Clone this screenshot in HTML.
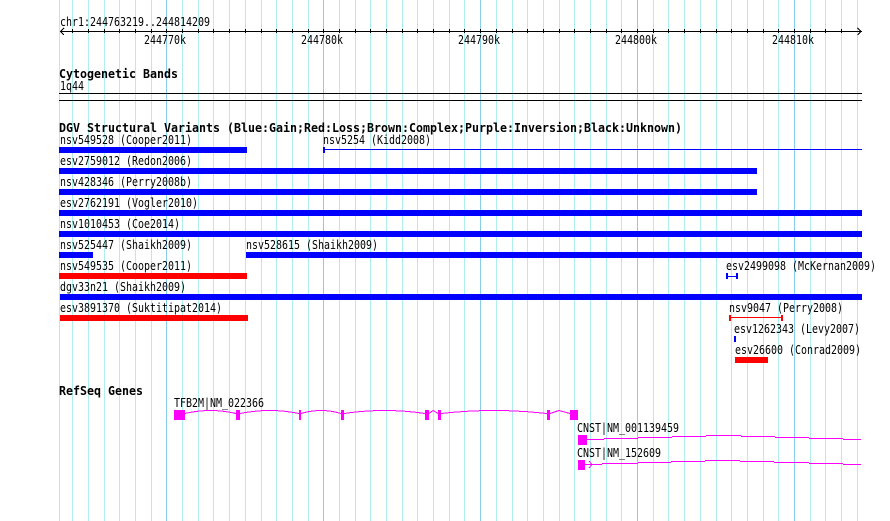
<!DOCTYPE html>
<html><head><meta charset="utf-8"><style>
html,body{margin:0;padding:0;background:#fff;width:890px;height:521px;overflow:hidden}
svg{display:block}
text{font-family:"DejaVu Sans Mono","Liberation Mono",monospace;font-size:12px;fill:#000}
text.b{font-weight:bold;font-size:12.5px}
</style></head><body>
<svg width="890" height="521" viewBox="0 0 890 521" xmlns="http://www.w3.org/2000/svg">
<g shape-rendering="crispEdges">
<path stroke="#aeeeee" stroke-width="1" fill="none" d="M59.5 0V521M72.5 0V521M88.5 0V521M104.5 0V521M119.5 0V521M135.5 0V521M151.5 0V521M182.5 0V521M198.5 0V521M213.5 0V521M229.5 0V521M245.5 0V521M261.5 0V521M276.5 0V521M292.5 0V521M308.5 0V521M339.5 0V521M355.5 0V521M370.5 0V521M386.5 0V521M402.5 0V521M417.5 0V521M433.5 0V521M449.5 0V521M464.5 0V521M496.5 0V521M512.5 0V521M527.5 0V521M543.5 0V521M559.5 0V521M574.5 0V521M590.5 0V521M606.5 0V521M621.5 0V521M653.5 0V521M668.5 0V521M684.5 0V521M700.5 0V521M716.5 0V521M731.5 0V521M747.5 0V521M763.5 0V521M778.5 0V521M810.5 0V521M825.5 0V521M841.5 0V521M857.5 0V521"/>
<path stroke="#87ceeb" stroke-width="1" fill="none" d="M166.5 0V521M323.5 0V521M480.5 0V521M637.5 0V521M794.5 0V521"/>
<path stroke="#000" fill="none" d="M60 31.5H862M59 93.5H862M59 100.5H862"/>
<path stroke="#000" fill="none" d="M72.5 29V33M88.5 29V33M104.5 29V33M119.5 29V33M135.5 29V33M151.5 29V33M166.5 29V33M182.5 29V33M198.5 29V33M213.5 29V33M229.5 29V33M245.5 29V33M261.5 29V33M276.5 29V33M292.5 29V33M308.5 29V33M323.5 29V33M339.5 29V33M355.5 29V33M370.5 29V33M386.5 29V33M402.5 29V33M417.5 29V33M433.5 29V33M449.5 29V33M464.5 29V33M480.5 29V33M496.5 29V33M512.5 29V33M527.5 29V33M543.5 29V33M559.5 29V33M574.5 29V33M590.5 29V33M606.5 29V33M621.5 29V33M637.5 29V33M653.5 29V33M668.5 29V33M684.5 29V33M700.5 29V33M716.5 29V33M731.5 29V33M747.5 29V33M763.5 29V33M778.5 29V33M794.5 29V33M810.5 29V33M825.5 29V33M841.5 29V33"/>
<path stroke="#000" fill="none" d="M64 28L60.5 31.5L64 35M857.5 28L861 31.5L857.5 35"/>
<g fill="#0000ff">
<rect x="59" y="147" width="188" height="6"/>
<rect x="323" y="147" width="2" height="6"/>
<rect x="323" y="149" width="539" height="1"/>
<rect x="59" y="168" width="698" height="6"/>
<rect x="59" y="189" width="698" height="6"/>
<rect x="59" y="210" width="803" height="6"/>
<rect x="59" y="231" width="803" height="6"/>
<rect x="59" y="252" width="34" height="6"/>
<rect x="246" y="252" width="616" height="6"/>
<rect x="60" y="294" width="802" height="6"/>
<rect x="726" y="273" width="2" height="6"/>
<rect x="736" y="273" width="2" height="6"/>
<rect x="726" y="276" width="12" height="1"/>
<rect x="734" y="336" width="2" height="6"/>
</g>
<g fill="#ff0000">
<rect x="59" y="273" width="188" height="6"/>
<rect x="60" y="315" width="188" height="6"/>
<rect x="729" y="315" width="2" height="6"/>
<rect x="781" y="315" width="2" height="6"/>
<rect x="729" y="317" width="54" height="1"/>
<rect x="735" y="357" width="33" height="6"/>
</g>
<g fill="#ff00ff">
<rect x="174" y="410" width="11" height="10"/>
<rect x="236" y="410" width="4" height="10"/>
<rect x="299" y="410" width="2" height="10"/>
<rect x="341" y="410" width="3" height="10"/>
<rect x="425" y="410" width="4" height="10"/>
<rect x="438" y="410" width="3" height="10"/>
<rect x="547" y="410" width="3" height="10"/>
<rect x="570" y="410" width="8" height="10"/>
<rect x="578" y="435" width="9" height="10"/>
<rect x="578" y="460" width="7" height="10"/>
</g>
<g stroke="#ff00ff" fill="none">
<path d="M185 413.5Q210.5 407.5 236 413.5M240 413.5Q269.5 407.5 299 413.5M301 413.5Q321 407.5 341 413.5M344 413.5Q384.5 407.5 425 413.5M429 413.5L433 410.5L438 413.5M441 413.5Q494 407.5 547 413.5M550 413.5L559 410.5L570 413.5"/>
<path d="M587 439.5H604M604 438.5H638M638 437.5H672M672 436.5H706M706 435.5H741M741 436.5H775M775 437.5H809M809 438.5H843M843 439.5H861"/>
<path d="M585 464.5H602M602 463.5H638M638 462.5H671M671 461.5H705M705 460.5H740M740 461.5H774M774 462.5H809M809 463.5H843M843 464.5H861"/>
<path d="M589 461L592 464.5L589 468"/>
</g>
</g>
<text x="60" y="26" textLength="150" lengthAdjust="spacingAndGlyphs">chr1:244763219..244814209</text>
<text x="144" y="44" textLength="42" lengthAdjust="spacingAndGlyphs">244770k</text>
<text x="301" y="44" textLength="42" lengthAdjust="spacingAndGlyphs">244780k</text>
<text x="458" y="44" textLength="42" lengthAdjust="spacingAndGlyphs">244790k</text>
<text x="615" y="44" textLength="42" lengthAdjust="spacingAndGlyphs">244800k</text>
<text x="772" y="44" textLength="42" lengthAdjust="spacingAndGlyphs">244810k</text>
<text class="b" x="59" y="78" textLength="119" lengthAdjust="spacingAndGlyphs">Cytogenetic Bands</text>
<text x="60" y="90" textLength="24" lengthAdjust="spacingAndGlyphs">1q44</text>
<text class="b" x="59" y="132" textLength="623" lengthAdjust="spacingAndGlyphs">DGV Structural Variants (Blue:Gain;Red:Loss;Brown:Complex;Purple:Inversion;Black:Unknown)</text>
<text x="60" y="144" textLength="132" lengthAdjust="spacingAndGlyphs">nsv549528 (Cooper2011)</text>
<text x="323" y="144" textLength="108" lengthAdjust="spacingAndGlyphs">nsv5254 (Kidd2008)</text>
<text x="60" y="165" textLength="132" lengthAdjust="spacingAndGlyphs">esv2759012 (Redon2006)</text>
<text x="60" y="186" textLength="132" lengthAdjust="spacingAndGlyphs">nsv428346 (Perry2008b)</text>
<text x="60" y="207" textLength="138" lengthAdjust="spacingAndGlyphs">esv2762191 (Vogler2010)</text>
<text x="60" y="228" textLength="120" lengthAdjust="spacingAndGlyphs">nsv1010453 (Coe2014)</text>
<text x="60" y="249" textLength="132" lengthAdjust="spacingAndGlyphs">nsv525447 (Shaikh2009)</text>
<text x="246" y="249" textLength="132" lengthAdjust="spacingAndGlyphs">nsv528615 (Shaikh2009)</text>
<text x="60" y="270" textLength="132" lengthAdjust="spacingAndGlyphs">nsv549535 (Cooper2011)</text>
<text x="726" y="270" textLength="150" lengthAdjust="spacingAndGlyphs">esv2499098 (McKernan2009)</text>
<text x="60" y="291" textLength="126" lengthAdjust="spacingAndGlyphs">dgv33n21 (Shaikh2009)</text>
<text x="60" y="312" textLength="162" lengthAdjust="spacingAndGlyphs">esv3891370 (Suktitipat2014)</text>
<text x="729" y="312" textLength="114" lengthAdjust="spacingAndGlyphs">nsv9047 (Perry2008)</text>
<text x="734" y="333" textLength="126" lengthAdjust="spacingAndGlyphs">esv1262343 (Levy2007)</text>
<text x="735" y="354" textLength="126" lengthAdjust="spacingAndGlyphs">esv26600 (Conrad2009)</text>
<text class="b" x="59" y="395" textLength="84" lengthAdjust="spacingAndGlyphs">RefSeq Genes</text>
<text x="174" y="407" textLength="90" lengthAdjust="spacingAndGlyphs">TFB2M|NM_022366</text>
<text x="577" y="432" textLength="102" lengthAdjust="spacingAndGlyphs">CNST|NM_001139459</text>
<text x="577" y="457" textLength="84" lengthAdjust="spacingAndGlyphs">CNST|NM_152609</text>
</svg>
</body></html>
